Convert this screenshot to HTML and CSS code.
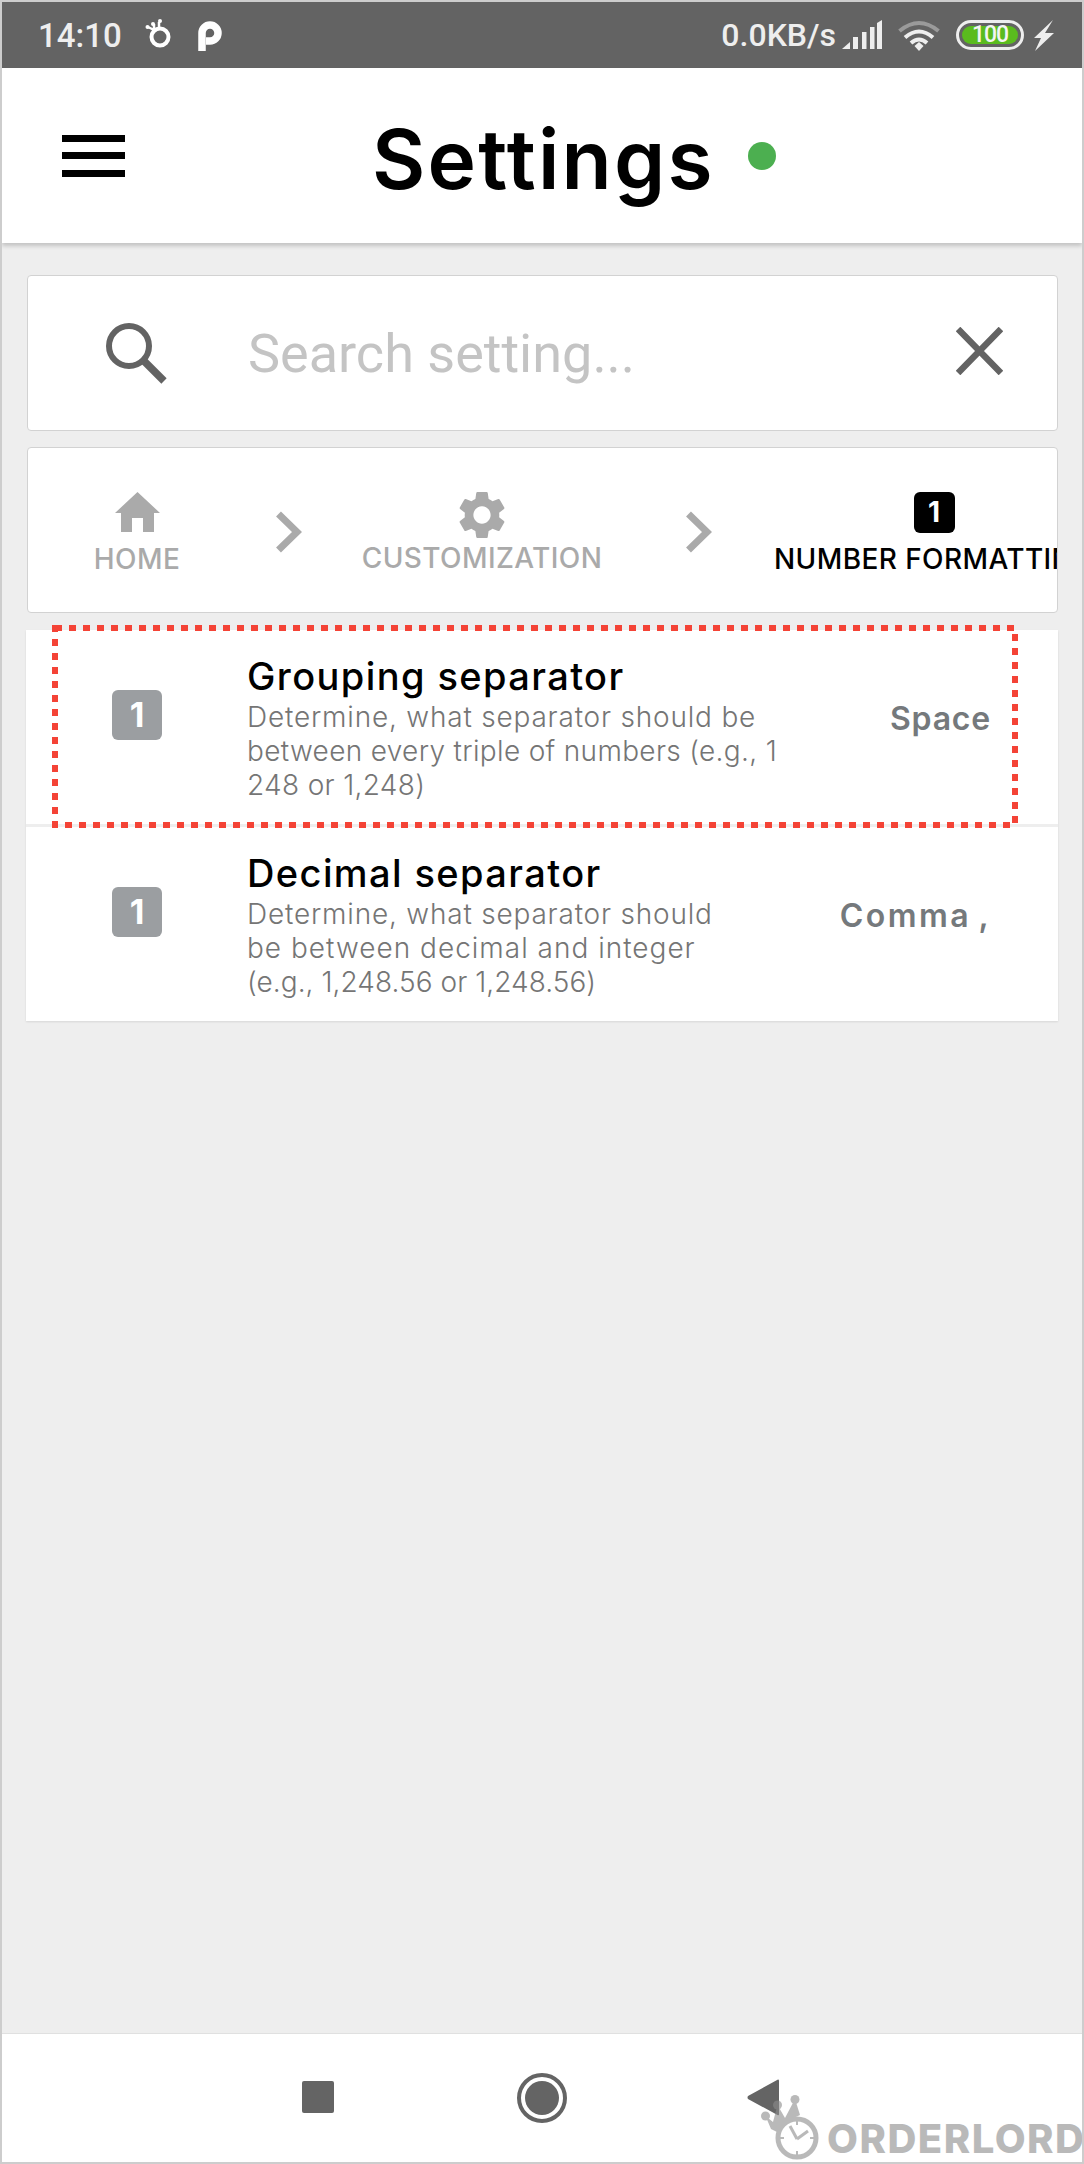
FILE: index.html
```html
<!DOCTYPE html>
<html lang="en">
<head>
    <meta charset="UTF-8" />
    <title>Settings</title>
    <link rel="stylesheet" href="styles.css">
</head>
<body>
<div class="screen">
    <div class="status-bar">
        <span class="clock">14:10</span>
        <svg class="ic-ring" width="27" height="30" viewBox="0 0 27 30">
            <circle cx="15" cy="18" r="8.5" fill="none" stroke="#fff" stroke-width="4"/>
            <path d="M9 11 L3 8 M14 9 L14 3 M9 11 L9 5" stroke="#fff" stroke-width="2.5" fill="none"/>
            <circle cx="2.5" cy="8" r="2" fill="#fff"/><circle cx="8" cy="5" r="2" fill="#fff"/><circle cx="15" cy="2" r="2" fill="#fff"/>
        </svg>
        <svg class="ic-p" width="24" height="30" viewBox="0 0 24 30">
            <path d="M4 30 V12 a8 8 0 1 1 8 8 H8" fill="none" stroke="#fff" stroke-width="7.5"/>
        </svg>
        <span class="net-speed">0.0KB/s</span>
        <svg class="ic-signal" width="40" height="29" viewBox="0 0 40 29" fill="#eee">
            <path d="M0 29 L8 22 V29 Z"/>
            <rect x="11" y="17" width="5" height="12"/>
            <rect x="20" y="12" width="4.5" height="17"/>
            <rect x="28" y="7" width="4.5" height="22"/>
            <path d="M35 3 L40 0 V29 H35 Z"/>
        </svg>
        <svg class="ic-wifi" width="42" height="31" viewBox="0 0 42 31" fill="none" stroke-width="4">
            <path d="M1.5 11 Q21 -5 40.500 11" stroke="#9a9a9a"/>
            <path d="M7 17.500 Q21 5.500 35 17.500" stroke="#eee"/>
            <path d="M13 23 Q21 16 29 23" stroke="#eee"/>
            <path d="M16.500 26 L21 22 L25.500 26 L21 31 Z" fill="#eee" stroke="none"/>
        </svg>
        <div class="battery"><div class="battery-level">100</div></div>
        <svg class="ic-bolt" width="20" height="31" viewBox="0 0 20 31" fill="#eee">
            <path d="M19 0 L11 13 H20 L1 31 L7 18 H0 Z"/>
        </svg>
    </div>

    <header class="app-header">
        <button class="menu-btn"><span></span><span></span><span></span></button>
        <h1>Settings</h1>
        <span class="online-dot"></span>
    </header>

    <main class="content">
        <div class="card search-card">
            <svg class="ic-search" width="61" height="61" viewBox="0 0 61 61" fill="none" stroke="#636363">
                <circle cx="23" cy="23" r="20" stroke-width="6"/>
                <path d="M38 38 L58 58" stroke-width="7.500"/>
            </svg>
            <span class="search-placeholder">Search setting...</span>
            <svg class="ic-close" width="47" height="48" viewBox="0 0 47 48" stroke="#636363" stroke-width="6.500">
                <path d="M2 2 L45 46 M45 2 L2 46"/>
            </svg>
        </div>

        <nav class="card crumbs">
            <div class="crumb crumb-home">
                <svg width="45" height="40" viewBox="0 0 45 40" fill="#aaa">
                    <path d="M22.500 0 L45 21 H39 V40 H28 V26 H17 V40 H6 V21 H0 Z"/>
                </svg>
                <span>HOME</span>
            </div>
            <svg class="crumb-arrow" width="26" height="42" viewBox="0 0 26 42" fill="none" stroke="#aaa" stroke-width="7">
                <path d="M2.500 3 L21 21 L2.500 39"/>
            </svg>
            <div class="crumb crumb-custom">
                <svg width="48" height="48" viewBox="2 2 20 20" fill="#aaa">
                    <path fill-rule="evenodd" d="M19.140 12.940c.04-.3.06-.61.06-.94 0-.32-.02-.64-.07-.94l2.030-1.580a.49.49 0 0 0 .12-.61l-1.920-3.320a.488.488 0 0 0-.59-.22l-2.390.96c-.5-.38-1.030-.7-1.620-.94l-.36-2.540a.484.484 0 0 0-.48-.41h-3.840c-.24 0-.43.17-.47.41l-.36 2.540c-.59.24-1.130.57-1.620.94l-2.390-.96c-.22-.08-.47 0-.59.22L2.740 8.870c-.12.21-.08.47.12.61l2.030 1.580c-.05.3-.09.63-.09.94s.02.64.07.94l-2.030 1.580a.49.49 0 0 0-.12.61l1.920 3.320c.12.22.37.29.59.22l2.390-.96c.5.38 1.030.7 1.620.94l.36 2.540c.05.24.24.41.48.41h3.840c.24 0 .44-.17.47-.41l.36-2.540c.59-.24 1.130-.56 1.620-.94l2.390.96c.22.08.47 0 .59-.22l1.920-3.320c.12-.22.07-.47-.12-.61l-2.010-1.580zM12 15.600c-1.980 0-3.600-1.620-3.600-3.600s1.620-3.600 3.600-3.600 3.600 1.620 3.600 3.600-1.620 3.600-3.600 3.600z"/>
                </svg>
                <span>CUSTOMIZATION</span>
            </div>
            <svg class="crumb-arrow" width="26" height="42" viewBox="0 0 26 42" fill="none" stroke="#aaa" stroke-width="7">
                <path d="M2.500 3 L21 21 L2.500 39"/>
            </svg>
            <div class="crumb crumb-active">
                <div class="crumb-badge">1</div>
                <span>NUMBER FORMATTING</span>
            </div>
        </nav>

        <div class="list-card">
            <svg class="highlight" width="966" height="203" viewBox="0 0 966 203" fill="none">
                <rect x="3" y="3" width="960" height="197" stroke="#f44336" stroke-width="6" stroke-dasharray="7 7"/>
            </svg>
            <div class="setting-row">
                <div class="row-badge">1</div>
                <div class="row-text">
                    <div class="row-title">Grouping separator</div>
                    <div class="row-desc">Determine, what separator should be<br><span class="tight">between every triple of numbers (e.g., 1</span><br><span class="tight">248 or 1,248)</span></div>
                </div>
                <div class="row-value">Space</div>
            </div>
            <div class="setting-row">
                <div class="row-badge">1</div>
                <div class="row-text">
                    <div class="row-title">Decimal separator</div>
                    <div class="row-desc">Determine, what separator should<br><span class="wide">be between decimal and integer</span><br><span class="tighter">(e.g., 1,248.56 or 1,248.56)</span></div>
                </div>
                <div class="row-value row-value-wide">Comma ,</div>
            </div>
        </div>
    </main>

    <footer class="nav-bar">
        <div class="nav-square"></div>
        <div class="nav-circle"><div></div></div>
        <svg class="nav-back" width="32" height="37" viewBox="0 0 32 37" fill="#646464">
            <path d="M31 0.500 Q32 0 32 2 V35 Q32 37 30.500 36 L1 20 Q0 18.500 1 17 Z"/>
        </svg>
        <div class="watermark">
            <svg width="62" height="65" viewBox="0 0 62 65" fill="none" stroke="#8c8c8c">
                <circle cx="38" cy="43" r="19" stroke-width="5"/>
                <path d="M6.500 21 L14 27 L18.500 10 L26 23 L36 4 L41 20 L24 28 L20 38 L12 34 Z" fill="#8c8c8c" stroke="none"/>
                <path d="M38 44 L31 31 M38 44 L49 36" stroke-width="3"/>
                <path d="M38 26 V30 M38 56 V60 M21 43 H25 M51 43 H55" stroke-width="2"/>
                <circle cx="6.500" cy="21" r="4.500" fill="#8c8c8c" stroke="none"/>
                <circle cx="18.500" cy="10" r="4.500" fill="#8c8c8c" stroke="none"/>
                <circle cx="36" cy="4.500" r="4.500" fill="#8c8c8c" stroke="none"/>
            </svg>
            <span>ORDERLORD</span>
        </div>
    </footer>
</div>
</body>
</html>
```

FILE: styles.css
```css
* {
    box-sizing: border-box;
}

body {
    margin: 0;
    font-family: Inter, "Liberation Sans", sans-serif;
}

.screen {
    width: 1084px;
    height: 2164px;
    border: 2px solid #cdcdcd;
    background: #eee;
    display: flex;
    flex-direction: column;
    overflow: hidden;
}

/* status bar */
.status-bar {
    height: 66px;
    flex-shrink: 0;
    background: #636363;
    color: #eee;
    display: flex;
    align-items: center;
    padding-left: 36px;
    font-family: Roboto, sans-serif;
    font-weight: 500;
    font-size: 33px;
}

.clock {
    width: 107px;
}

.ic-ring {
    margin-top: -2px;
}

.ic-p {
    margin-left: 26px;
    margin-top: 2px;
}

.net-speed {
    margin-left: auto;
    font-size: 32px;
}

.ic-signal {
    margin-left: 6px;
    margin-top: -1px;
}

.ic-wifi {
    margin-left: 16px;
}

.battery {
    width: 68px;
    height: 30px;
    margin-left: 16px;
    border: 3px solid #eee;
    border-radius: 15px;
    padding: 3px;
}

.battery-level {
    height: 18px;
    background: #5abb1e;
    border-radius: 9px;
    color: #f4f4f4;
    font-size: 23px;
    line-height: 18px;
    letter-spacing: -1px;
    text-align: center;
}

.ic-bolt {
    margin-left: 10px;
    margin-right: 28px;
}

/* header */
.app-header {
    height: 175px;
    flex-shrink: 0;
    background: #fff;
    display: flex;
    align-items: center;
    padding-left: 60px;
    box-shadow: 0 3px 4px rgba(0, 0, 0, 0.18);
    position: relative;
}

.menu-btn {
    width: 63px;
    height: 42px;
    padding: 0;
    border: none;
    background: none;
    display: flex;
    flex-direction: column;
    justify-content: space-between;
}

.menu-btn span {
    display: block;
    height: 7px;
    background: #000;
}

.app-header h1 {
    margin: 8px 0 0 247px;
    font-size: 82px;
    font-weight: 600;
    letter-spacing: 2.2px;
    line-height: 1;
    color: #000;
}

.online-dot {
    width: 28px;
    height: 28px;
    margin-left: 33px;
    border-radius: 50%;
    background: #4caf50;
}

/* cards */
.content {
    flex: 1;
    padding: 32px 24px 0 25px;
}

.card {
    background: #fff;
    border: 1px solid #d2d2d2;
    border-radius: 4px;
}

.search-card {
    height: 156px;
    display: flex;
    align-items: center;
    padding: 0 54px 0 78px;
}

.search-placeholder {
    margin-left: 81px;
    font-family: Roboto, sans-serif;
    font-weight: 400;
    font-size: 54px;
    color: #c4c4c4;
}

.ic-close {
    margin-left: auto;
    margin-top: -4px;
}

.crumbs {
    height: 166px;
    margin-top: 16px;
    display: flex;
    align-items: center;
    overflow: hidden;
    padding: 6px 0 0 66px;
}

.crumb {
    display: flex;
    flex-direction: column;
    align-items: center;
    flex-shrink: 0;
    height: 82px;
    justify-content: space-between;
    font-size: 28px;
    font-weight: 500;
    letter-spacing: 0.4px;
    color: #aaa;
    white-space: nowrap;
}

.crumb span {
    line-height: 30px;
}

.crumb-arrow {
    flex-shrink: 0;
    margin-top: -2px;
}

.crumb-home {
    width: 86px;
}

.crumb-custom {
    width: 236px;
    margin-left: 62px;
    margin-top: -2px;
}

.crumb-home + .crumb-arrow {
    margin-left: 96px;
}

.crumb-custom + .crumb-arrow {
    margin-left: 86px;
}

.crumb-active {
    margin-left: 62px;
    color: #000;
}

.crumb-badge {
    width: 41px;
    height: 41px;
    border-radius: 6px;
    background: #000;
    color: #fff;
    font-size: 28px;
    font-weight: 700;
    line-height: 41px;
    text-align: center;
}

/* settings list */
.list-card {
    margin-top: 17px;
    margin-left: -1px;
    background: #fff;
    position: relative;
    box-shadow: 0 1px 2px rgba(0, 0, 0, 0.1);
}

.highlight {
    position: absolute;
    left: 26px;
    top: -5px;
}

.setting-row {
    height: 194px;
    display: flex;
    align-items: flex-start;
    padding: 25px 67px 0 86px;
    border-bottom: 3px solid #eee;
}

.setting-row:first-of-type {
    height: 197px;
}

.setting-row:last-child {
    border-bottom: none;
}

.row-badge {
    width: 50px;
    height: 50px;
    margin-top: 35px;
    border-radius: 6px;
    background: #9b9ea1;
    color: #fff;
    font-size: 34px;
    font-weight: 700;
    line-height: 50px;
    text-align: center;
}

.row-text {
    margin-left: 85px;
}

.row-title {
    font-size: 38px;
    font-weight: 500;
    letter-spacing: 1.4px;
    line-height: 42px;
    margin-bottom: 3px;
    color: #000;
    white-space: nowrap;
}

.row-desc {
    font-size: 28px;
    font-weight: 300;
    letter-spacing: 0.8px;
    line-height: 34px;
    color: #757575;
    white-space: nowrap;
}

.row-desc .tight {
    letter-spacing: 0.33px;
}

.row-desc .tighter {
    letter-spacing: 0.05px;
}

.row-desc .wide {
    letter-spacing: 1px;
}

.row-value {
    margin-left: auto;
    margin-top: 46px;
    font-size: 32px;
    font-weight: 600;
    letter-spacing: 0.8px;
    line-height: 36px;
    color: #75797c;
    white-space: nowrap;
}

.row-value-wide {
    letter-spacing: 2.4px;
    word-spacing: -3px;
}

/* nav bar */
.nav-bar {
    height: 129px;
    flex-shrink: 0;
    background: #fff;
    border-top: 1px solid #e0e0e0;
    display: flex;
    align-items: flex-start;
    position: relative;
    padding-left: 300px;
}

.nav-square {
    width: 32px;
    height: 32px;
    margin-top: 47px;
    border-radius: 2px;
    background: #646464;
}

.nav-circle {
    width: 50px;
    height: 50px;
    margin-top: 39px;
    margin-left: 183px;
    border: 4px solid #646464;
    border-radius: 50%;
    padding: 4px;
}

.nav-circle div {
    width: 34px;
    height: 34px;
    border-radius: 50%;
    background: #646464;
}

.nav-back {
    margin-top: 45px;
    margin-left: 180px;
}

.watermark {
    position: absolute;
    left: 757px;
    top: 61px;
    display: flex;
    align-items: flex-end;
    gap: 6px;
    opacity: 0.6;
}

.watermark span {
    font-size: 40px;
    font-weight: 800;
    letter-spacing: 1.5px;
    color: #8c8c8c;
    line-height: 48px;
    margin-bottom: -3px;
}
```
